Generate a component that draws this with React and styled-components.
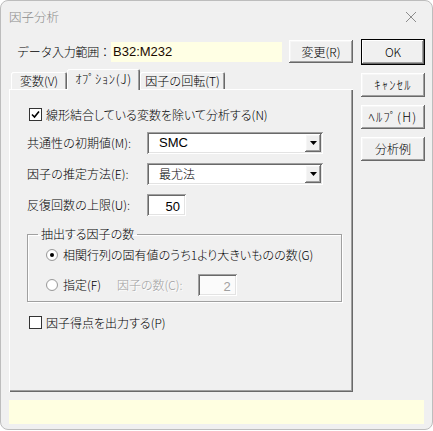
import React from 'react'
import styled, { createGlobalStyle, css } from 'styled-components'

const GlobalStyle = createGlobalStyle`
  html, body {
    margin: 0;
    background: #ffffff;
  }
  body {
    font-family: "Noto Sans CJK JP", "Noto Sans", sans-serif;
    font-size: 12px;
    font-weight: 300;
    font-feature-settings: "palt";
    color: #000;
  }
  * { box-sizing: border-box; }
`;

const raised = css`
  background: #f0f0f0;
  box-shadow:
    inset -1px -1px #696969,
    inset 1px 1px #ffffff,
    inset -2px -2px #a0a0a0,
    inset 2px 2px #f6f6f6;
`;

const sunken = css`
  box-shadow:
    inset 1px 1px #a0a0a0,
    inset -1px -1px #ffffff,
    inset 2px 2px #696969,
    inset -2px -2px #e3e3e3;
`;

// half-width katakana labels (ｷｬﾝｾﾙ etc.) are narrow in Noto, open them up a bit
const halfKana = css`
  font-size: 12.5px;
  letter-spacing: 1.2px;
`;

const Window = styled.div`
  width: 433px;
  height: 430px;
  border: 1px solid #bdbdbd;
  border-radius: 8px;
  background: #f0f0f0;
  display: flex;
  flex-direction: column;
  overflow: hidden;
`;

const TitleBar = styled.div`
  height: 31px;
  flex-shrink: 0;
  display: flex;
  align-items: center;
  justify-content: space-between;
  padding: 0 15px 0 8px;
  color: #8c8c8c;
  font-size: 12.5px;
`;

const Body = styled.div`
  padding: 7px 8px 0 8px;
  display: flex;
  flex-direction: column;
`;

const MainRow = styled.div`
  display: flex;
  align-items: flex-start;
`;

const LeftColumn = styled.div`
  width: 344px;
  display: flex;
  flex-direction: column;
`;

const RightColumn = styled.div`
  margin-left: 8px;
  width: 64px;
  display: flex;
  flex-direction: column;
  gap: 8px;
`;

const TopRow = styled.div`
  margin-top: 1px;
  height: 23px;
  display: flex;
  align-items: center;
  padding-left: 8px;
`;

const RangeLabel = styled.span`
  width: 94px;
  line-height: 14px;
  white-space: nowrap;
  font-feature-settings: normal;
  letter-spacing: -0.3px;
`;

const RangeField = styled.div`
  width: 171px;
  height: 20px;
  background: #ffffe4;
  padding-left: 2px;
  display: flex;
  align-items: center;
  font-family: "Liberation Sans", "Noto Sans", sans-serif;
  font-size: 13px;
  color: #1a0a00;
`;

const Button = styled.button`
  ${raised};
  width: 64px;
  height: ${p => p.$h || 24}px;
  border: none;
  padding: 0;
  margin: 0;
  margin-left: ${p => p.$ml || 0}px;
  font-family: inherit;
  font-size: 12px;
  font-weight: inherit;
  font-feature-settings: normal;
  color: #000;
  line-height: 14px;
  white-space: nowrap;
  ${p => p.$kana && halfKana}
  ${p => p.$default && css`
    box-shadow:
      inset 0 0 0 1px #000,
      inset -2px -2px #696969,
      inset 2px 2px #ffffff,
      inset -3px -3px #a0a0a0;
  `}
`;

const TabStrip = styled.div`
  margin-top: 6px;
  height: 20px;
  display: flex;
  align-items: flex-end;
  padding-left: 2px;
  position: relative;
  z-index: 1;
`;

const Tab = styled.div`
  width: ${p => p.$w}px;
  height: ${p => (p.$active ? 21 : 17)}px;
  margin-bottom: ${p => (p.$active ? -1 : 0)}px;
  background: #f0f0f0;
  border-top-left-radius: 2px;
  border-top-right-radius: 2px;
  box-shadow:
    inset 1px 1px #ffffff,
    inset -1px 0 #696969,
    inset -2px 0 #a0a0a0;
  display: flex;
  align-items: ${p => (p.$active ? 'flex-start' : 'center')};
  padding-top: ${p => (p.$active ? 3 : 0)}px;
  justify-content: center;
  line-height: 14px;
  white-space: nowrap;
  font-feature-settings: normal;
  ${p => p.$kana && css`
    font-size: 12.5px;
    letter-spacing: 0.6px;
  `}
`;

const Panel = styled.div`
  height: 303px;
  background: #f0f0f0;
  box-shadow:
    inset 1px 1px #ffffff,
    inset -1px -1px #696969,
    inset -2px -2px #a0a0a0;
  padding: 0 17px 0 18px;
  display: flex;
  flex-direction: column;
`;

const CheckRow = styled.label`
  margin-top: ${p => p.$mt}px;
  margin-left: 2px;
  height: 13px;
  display: flex;
  align-items: center;
  gap: 4px;
  line-height: 14px;
  white-space: nowrap;
`;

const CheckBox = styled.span`
  width: 13px;
  height: 13px;
  flex-shrink: 0;
  background: #fff;
  border: 1px solid #333;
  display: flex;
  align-items: center;
  justify-content: center;
`;

const FieldRow = styled.div`
  margin-top: ${p => p.$mt}px;
  height: 22px;
  display: flex;
  align-items: center;
`;

const FieldLabel = styled.span`
  width: 120px;
  line-height: 14px;
  white-space: nowrap;
  font-feature-settings: normal;
`;

const Combo = styled.div`
  ${sunken};
  width: 176px;
  height: 22px;
  background: #fff;
  display: flex;
  align-items: center;
  padding: 2px 2px 2px 12px;
`;

const ComboText = styled.span`
  flex: 1;
  line-height: 14px;
  font-family: ${p => (p.$latin ? '"Liberation Sans", sans-serif' : 'inherit')};
  font-size: ${p => (p.$latin ? 13 : 12)}px;
`;

const ArrowButton = styled.span`
  ${raised};
  width: 16px;
  height: 18px;
  display: flex;
  align-items: center;
  justify-content: center;
`;

const NumberBox = styled.div`
  ${sunken};
  width: ${p => p.$w}px;
  height: ${p => p.$h}px;
  background: ${p => (p.$disabled ? '#fbfbfb' : '#fff')};
  color: ${p => (p.$disabled ? '#a0a0a0' : '#000')};
  margin-left: ${p => p.$ml || 0}px;
  display: flex;
  align-items: center;
  justify-content: flex-end;
  padding: 3px 6px 0 0;
  font-family: "Liberation Sans", sans-serif;
  font-size: 13px;
`;

const GroupBox = styled.fieldset`
  margin: 11px 0 0 0;
  padding: 0 0 5px 0;
  width: 315px;
  border: 1px solid #a0a0a0;
  box-shadow: inset 1px 1px #ffffff, 1px 1px #ffffff;
  display: flex;
  flex-direction: column;
`;

const Legend = styled.legend`
  margin-left: 10px;
  padding: 0 3px;
  line-height: 14px;
`;

const RadioRow = styled.div`
  margin-top: ${p => p.$mt}px;
  margin-left: 18px;
  height: ${p => p.$h}px;
  display: flex;
  align-items: center;
  line-height: 14px;
  white-space: nowrap;
`;

const Radio = styled.span`
  width: 12px;
  height: 12px;
  border-radius: 50%;
  flex-shrink: 0;
  margin-right: 5px;
  background: radial-gradient(circle, #ffffff 55%, #e8e8e8 100%);
  border: 1px solid #9a9a9a;
  display: flex;
  align-items: center;
  justify-content: center;
  &::after {
    content: '';
    width: 4px;
    height: 4px;
    border-radius: 50%;
    background: ${p => (p.$checked ? '#000' : 'transparent')};
  }
`;

const DisabledText = styled.span`
  margin-left: ${p => p.$ml || 0}px;
  color: #a0a0a0;
  text-shadow: 1px 1px #ffffff;
`;

const StatusBar = styled.div`
  margin-top: 8px;
  height: 24px;
  background: #ffffe1;
`;

const CloseIcon = () => (
  <svg width="12" height="12" viewBox="0 0 12 12">
    <path d="M1 1 L11 11 M11 1 L1 11" stroke="#8c8c8c" strokeWidth="1" fill="none" />
  </svg>
);

const CheckMark = () => (
  <svg width="9" height="9" viewBox="0 0 9 9">
    <path d="M1 4.5 L3.5 7 L8 1.5" stroke="#000" strokeWidth="1.6" fill="none" />
  </svg>
);

const DownArrow = () => (
  <svg width="7" height="4" viewBox="0 0 7 4">
    <path d="M0 0 H7 L3.5 4 Z" fill="#000" />
  </svg>
);

const ComboBox = ({ value, latin }) => (
  <Combo>
    <ComboText $latin={latin}>{value}</ComboText>
    <ArrowButton><DownArrow /></ArrowButton>
  </Combo>
);

const App = () => {
  return (
    <>
      <GlobalStyle />
      <Window>
        <TitleBar>
          <span>因子分析</span>
          <CloseIcon />
        </TitleBar>
        <Body>
          <MainRow>
            <LeftColumn>
              <TopRow>
                <RangeLabel>データ入力範囲：</RangeLabel>
                <RangeField>B32:M232</RangeField>
                <Button $h={23} $ml={7}>変更(R)</Button>
              </TopRow>

              <TabStrip>
                <Tab $w={56}>変数(V)</Tab>
                <Tab $w={73} $active $kana>ｵﾌﾟｼｮﾝ(J)</Tab>
                <Tab $w={85}>因子の回転(T)</Tab>
              </TabStrip>

              <Panel>
                <CheckRow $mt={19}>
                  <CheckBox><CheckMark /></CheckBox>
                  線形結合している変数を除いて分析する(N)
                </CheckRow>

                <FieldRow $mt={11}>
                  <FieldLabel>共通性の初期値(M):</FieldLabel>
                  <ComboBox value="SMC" latin />
                </FieldRow>
                <FieldRow $mt={9}>
                  <FieldLabel>因子の推定方法(E):</FieldLabel>
                  <ComboBox value="最尤法" />
                </FieldRow>
                <FieldRow $mt={9}>
                  <FieldLabel>反復回数の上限(U):</FieldLabel>
                  <NumberBox $w={39} $h={22}>50</NumberBox>
                </FieldRow>

                <GroupBox>
                  <Legend>抽出する因子の数</Legend>
                  <RadioRow $mt={7} $h={14}>
                    <Radio $checked />
                    相関行列の固有値のうち1より大きいものの数(G)
                  </RadioRow>
                  <RadioRow $mt={12} $h={22}>
                    <Radio />
                    指定(F)
                    <DisabledText $ml={16}>因子の数(C):</DisabledText>
                    <NumberBox $w={39} $h={22} $ml={15} $disabled>2</NumberBox>
                  </RadioRow>
                </GroupBox>

                <CheckRow $mt={14}>
                  <CheckBox />
                  因子得点を出力する(P)
                </CheckRow>
              </Panel>
            </LeftColumn>

            <RightColumn>
              <Button $h={26} $default>OK</Button>
              <Button $h={24} $kana>ｷｬﾝｾﾙ</Button>
              <Button $h={24} $kana>ﾍﾙﾌﾟ(H)</Button>
              <Button $h={24}>分析例</Button>
            </RightColumn>
          </MainRow>
          <StatusBar />
        </Body>
      </Window>
    </>
  )
};

export default App
